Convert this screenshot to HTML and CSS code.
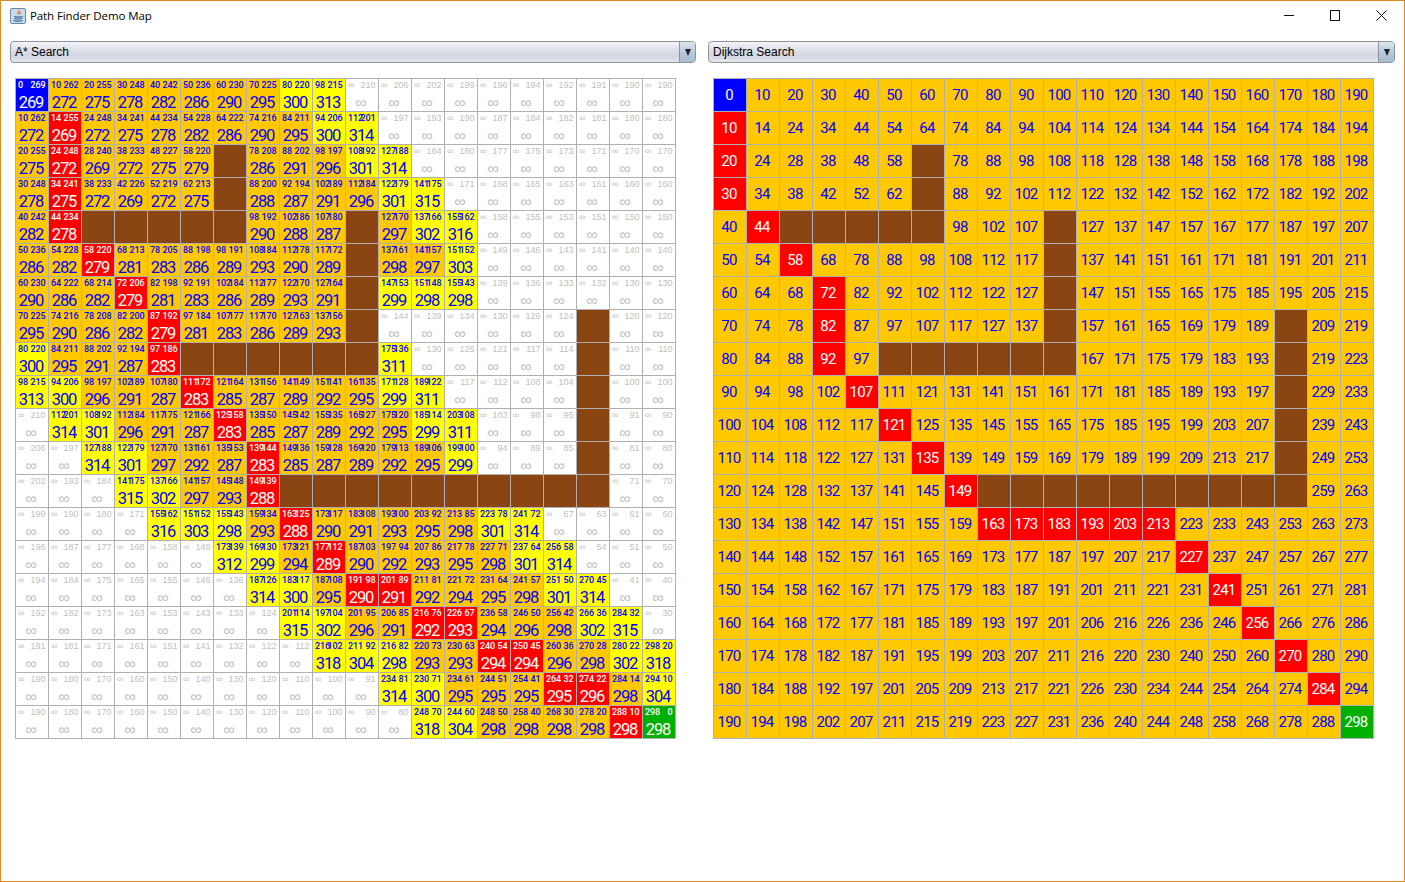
FILE: index.html
```html
<!DOCTYPE html>
<html lang="en">

<head>
    <meta charset="UTF-8">
    <title>Path Finder Demo Map</title>
    <link rel="stylesheet" href="styles.css">
</head>

<body>
    <div class="window">
        <div class="titlebar">
            <svg class="app-icon" viewBox="0 0 16 16" width="16" height="16">
                <rect x="0.5" y="0.5" width="15" height="15" rx="1.5" fill="#c9dcec" stroke="#6d87a0" />
                <path d="M8.5 2.5c1.5 1.2-1.8 2.2-.6 3.6M10.5 4c.8 1-1.6 1.5-.6 2.5" fill="none" stroke="#d9541a" stroke-width="1.1" />
                <path d="M4 8.5c1.5.8 6 .8 7.5 0M4.5 10.5c1.5.7 5 .7 6.5 0M3.5 12.5c2 1 7 1 9 0" fill="none" stroke="#2f5f8f" stroke-width="1.1" />
                <path d="M11.5 8.5c1.6-.3 1.6 1.6-.5 2" fill="none" stroke="#2f5f8f" stroke-width="0.9" />
            </svg>
            <span class="title">Path Finder Demo Map</span>
            <div class="controls">
                <div class="control">
                    <svg viewBox="0 0 11 11" width="11" height="11"><path d="M0 5.5h10" stroke="#111" fill="none" /></svg>
                </div>
                <div class="control">
                    <svg viewBox="0 0 11 11" width="11" height="11"><rect x="0.5" y="0.5" width="9" height="10" stroke="#111" fill="none" /></svg>
                </div>
                <div class="control">
                    <svg viewBox="0 0 11 11" width="11" height="11"><path d="M0.5 0.5l10 10M10.5 0.5l-10 10" stroke="#111" fill="none" /></svg>
                </div>
            </div>
        </div>

        <div class="panels">
            <div class="panel">
                <div class="combo">
                    <span class="combo-text">A* Search</span>
                    <span class="combo-arrow"></span>
                </div>
                <div class="board" id="astar"></div>
            </div>
            <div class="panel wide">
                <div class="combo">
                    <span class="combo-text">Dijkstra Search</span>
                    <span class="combo-arrow"></span>
                </div>
                <div class="board" id="dijkstra"></div>
            </div>
        </div>
    </div>
    <script src="board.js"></script>
</body>

</html>
```

FILE: styles.css
```css
* {
    box-sizing: border-box;
}

body {
    margin: 0;
    background: #ffffff;
    font-family: "Liberation Sans", Arial, sans-serif;
}

.window {
    width: 1405px;
    height: 882px;
    border: 1px solid #e08a1e;
    overflow: hidden;
}

.titlebar {
    display: flex;
    align-items: center;
    height: 29px;
    padding-left: 9px;
}

.app-icon {
    margin-right: 4px;
}

.title {
    font-family: "Open Sans", sans-serif;
    font-size: 11.5px;
    letter-spacing: -0.1px;
    color: #000000;
}

.controls {
    display: flex;
    margin-left: auto;
}

.control {
    display: flex;
    align-items: center;
    justify-content: center;
    width: 46px;
    height: 29px;
}

.panels {
    display: flex;
    gap: 12px;
    padding: 11px 9px 0 9px;
}

.panel {
    flex: 0 0 686px;
}

.panel.wide {
    flex: 1;
}

.combo {
    display: flex;
    align-items: center;
    justify-content: space-between;
    height: 22px;
    border: 1px solid #8d949c;
    border-radius: 4px;
    background: linear-gradient(#f4f5f8, #e2e4ec 30%, #d2d5df 70%, #e6e8ee);
    overflow: hidden;
}

.combo-text {
    padding-left: 4px;
    font-size: 12px;
    color: #000000;
}

.combo-arrow {
    display: flex;
    align-items: center;
    justify-content: center;
    width: 16px;
    height: 100%;
    border-left: 1px solid #8d949c;
    background: linear-gradient(#dce6ef, #b4c8da 55%, #a5bccf);
}

.combo-arrow::after {
    content: "";
    border-left: 3px solid transparent;
    border-right: 3px solid transparent;
    border-top: 7px solid #222222;
}

.board {
    display: grid;
    grid-template-columns: repeat(20, 32px);
    grid-auto-rows: 32px;
    gap: 1px;
    width: 661px;
    margin: 15px 0 0 5px;
    padding: 1px;
    background: #b0b0b0;
}

.cell {
    color: #0000ff;
    background: #ffc800;
    text-align: center;
}

.yellow {
    background: #ffff00;
}

.red {
    background: #ff0000;
    color: #ffffff;
}

.start {
    background: #0000ff;
    color: #ffffff;
}

.end {
    background: #00b000;
    color: #ffffff;
}

.wall {
    background: #8b4513;
}

.open {
    background: #ffffff;
    color: #c0c0c0;
}

.top {
    display: grid;
    padding: 1px 2.5px 0 2px;
    font-family: Roboto, sans-serif;
    font-size: 9px;
    font-weight: 500;
    line-height: 11px;
    letter-spacing: -0.15px;
}

.open .top {
    font-family: "Liberation Sans", sans-serif;
    font-weight: normal;
    letter-spacing: 0;
}

.top span {
    grid-area: 1 / 1;
    justify-self: start;
}

.top .est {
    justify-self: end;
}

.big {
    margin-top: 3px;
    padding-right: 2px;
    font-family: Roboto, sans-serif;
    font-size: 16.5px;
    font-weight: 400;
    line-height: 17px;
    letter-spacing: -1.1px;
}

.open .big {
    font-family: "Liberation Sans", sans-serif;
    font-weight: normal;
    font-size: 16px;
    letter-spacing: 0;
}

#dijkstra .cell {
    padding-right: 2px;
    font-family: Roboto, sans-serif;
    font-size: 15px;
    font-weight: 400;
    line-height: 32px;
    letter-spacing: -0.8px;
}
```

FILE: board.js
```js
// A* cells: class letter + g.h.f, u + h for never reached, w for a wall
const astarRows = [
    "s0.269.269 o10.262.272 o20.255.275 o30.248.278 o40.242.282 o50.236.286 o60.230.290 o70.225.295 y80.220.300 y98.215.313 u210 u206 u202 u199 u196 u194 u192 u191 u190 u190",
    "o10.262.272 r14.255.269 o24.248.272 o34.241.275 o44.234.278 o54.228.282 o64.222.286 o74.216.290 o84.211.295 y94.206.300 y112.201.314 u197 u193 u190 u187 u184 u182 u181 u180 u180",
    "o20.255.275 r24.248.272 o28.240.269 o38.233.272 o48.227.275 o58.220.279 w o78.208.286 o88.202.291 o98.197.296 y108.192.301 y127.188.314 u184 u180 u177 u175 u173 u171 u170 u170",
    "o30.248.278 r34.241.275 o38.233.272 o42.226.269 o52.219.272 o62.213.275 w o88.200.288 o92.194.287 o102.189.291 o112.184.296 y122.179.301 y141.175.315 u171 u168 u165 u163 u161 u160 u160",
    "o40.242.282 r44.234.278 w w w w w o98.192.290 o102.186.288 o107.180.287 w o127.170.297 y137.166.302 y155.162.316 u158 u155 u153 u151 u150 u150",
    "o50.236.286 o54.228.282 r58.220.279 o68.213.281 o78.205.283 o88.198.286 o98.191.289 o108.184.293 o112.178.290 o117.172.289 w o137.161.298 o141.157.297 y151.152.303 u149 u146 u143 u141 u140 u140",
    "o60.230.290 o64.222.286 o68.214.282 r72.206.279 o82.198.281 o92.191.283 o102.184.286 o112.177.289 o122.170.293 o127.164.291 w y147.153.299 y151.148.298 y155.143.298 u139 u136 u133 u132 u130 u130",
    "o70.225.295 o74.216.290 o78.208.286 o82.200.282 r87.192.279 o97.184.281 o107.177.283 o117.170.286 o127.163.289 o137.156.293 w u144 u139 u134 u130 u126 u124 w u120 u120",
    "y80.220.300 o84.211.295 o88.202.291 o92.194.287 r97.186.283 w w w w w w y175.136.311 u130 u125 u121 u117 u114 w u110 u110",
    "y98.215.313 y94.206.300 o98.197.296 o102.189.291 o107.180.287 r111.172.283 o121.164.285 o131.156.287 o141.149.289 o151.141.292 o161.135.295 y171.128.299 y189.122.311 u117 u112 u108 u104 w u100 u100",
    "u210 y112.201.314 y108.192.301 o112.184.296 o117.175.291 o121.166.287 r125.158.283 o135.150.285 o145.142.287 o155.135.289 o165.127.292 o175.120.295 y185.114.299 y203.108.311 u103 u98 u95 w u91 u90",
    "u206 u197 y127.188.314 y122.179.301 o127.170.297 o131.161.292 o135.153.287 r139.144.283 o149.136.285 o159.128.287 o169.120.289 o179.113.292 o189.106.295 y199.100.299 u94 u89 u85 w u81 u80",
    "u202 u193 u184 y141.175.315 y137.166.302 o141.157.297 o145.148.293 r149.139.288 w w w w w w w w w w u71 u70",
    "u199 u190 u180 u171 y155.162.316 y151.152.303 y155.143.298 o159.134.293 r163.125.288 o173.117.290 o183.108.291 o193.100.293 o203.92.295 o213.85.298 y223.78.301 y241.72.314 u67 u63 u61 u60",
    "u196 u187 u177 u168 u158 u149 y173.139.312 y169.130.299 o173.121.294 r177.112.289 o187.103.290 o197.94.292 o207.86.293 o217.78.295 o227.71.298 y237.64.301 y256.58.314 u54 u51 u50",
    "u194 u184 u175 u165 u155 u146 u136 y187.126.314 y183.117.300 o187.108.295 r191.98.290 r201.89.291 o211.81.292 o221.72.294 o231.64.295 o241.57.298 y251.50.301 y270.45.314 u41 u40",
    "u192 u182 u173 u163 u153 u143 u133 u124 y201.114.315 y197.104.302 o201.95.296 o206.85.291 r216.76.292 r226.67.293 o236.58.294 o246.50.296 o256.42.298 y266.36.302 y284.32.315 u30",
    "u191 u181 u171 u161 u151 u141 u132 u122 u112 y216.102.318 y211.92.304 y216.82.298 o220.73.293 o230.63.293 r240.54.294 r250.45.294 o260.36.296 o270.28.298 y280.22.302 y298.20.318",
    "u190 u180 u170 u160 u150 u140 u130 u120 u110 u100 u91 y234.81.314 y230.71.300 o234.61.295 o244.51.295 o254.41.295 r264.32.295 r274.22.296 o284.14.298 y294.10.304",
    "u190 u180 u170 u160 u150 u140 u130 u120 u110 u100 u90 u80 y248.70.318 y244.60.304 o248.50.298 o258.40.298 o268.30.298 o278.20.298 r288.10.298 e298.0.298"
];

// Dijkstra cells: plain number is orange, r/s/e prefix for path, start, end
const dijkstraRows = [
    "s0 10 20 30 40 50 60 70 80 90 100 110 120 130 140 150 160 170 180 190",
    "r10 14 24 34 44 54 64 74 84 94 104 114 124 134 144 154 164 174 184 194",
    "r20 24 28 38 48 58 w 78 88 98 108 118 128 138 148 158 168 178 188 198",
    "r30 34 38 42 52 62 w 88 92 102 112 122 132 142 152 162 172 182 192 202",
    "40 r44 w w w w w 98 102 107 w 127 137 147 157 167 177 187 197 207",
    "50 54 r58 68 78 88 98 108 112 117 w 137 141 151 161 171 181 191 201 211",
    "60 64 68 r72 82 92 102 112 122 127 w 147 151 155 165 175 185 195 205 215",
    "70 74 78 r82 87 97 107 117 127 137 w 157 161 165 169 179 189 w 209 219",
    "80 84 88 r92 97 w w w w w w 167 171 175 179 183 193 w 219 223",
    "90 94 98 102 r107 111 121 131 141 151 161 171 181 185 189 193 197 w 229 233",
    "100 104 108 112 117 r121 125 135 145 155 165 175 185 195 199 203 207 w 239 243",
    "110 114 118 122 127 131 r135 139 149 159 169 179 189 199 209 213 217 w 249 253",
    "120 124 128 132 137 141 145 r149 w w w w w w w w w w 259 263",
    "130 134 138 142 147 151 155 159 r163 r173 r183 r193 r203 r213 223 233 243 253 263 273",
    "140 144 148 152 157 161 165 169 173 177 187 197 207 217 r227 237 247 257 267 277",
    "150 154 158 162 167 171 175 179 183 187 191 201 211 221 231 r241 251 261 271 281",
    "160 164 168 172 177 181 185 189 193 197 201 206 216 226 236 246 r256 266 276 286",
    "170 174 178 182 187 191 195 199 203 207 211 216 220 230 240 250 260 r270 280 290",
    "180 184 188 192 197 201 205 209 213 217 221 226 230 234 244 254 264 274 r284 294",
    "190 194 198 202 207 211 215 219 223 227 231 236 240 244 248 258 268 278 288 e298"
];

const kinds = { o: "", y: "yellow", r: "red", s: "start", e: "end", w: "wall", u: "open" };

function addCell(board, kind) {
    const cell = document.createElement("div");
    cell.className = ("cell " + kinds[kind]).trim();
    board.appendChild(cell);
    return cell;
}

function addTop(cell, g, h, f) {
    const top = document.createElement("div");
    top.className = "top";
    top.innerHTML = "<span>" + g + "</span><span class=\"est\">" + h + "</span>";
    const big = document.createElement("div");
    big.className = "big";
    big.textContent = f;
    cell.appendChild(top);
    cell.appendChild(big);
}

const astar = document.getElementById("astar");
astarRows.join(" ").split(" ").forEach(function (token) {
    const kind = token[0];
    const cell = addCell(astar, kind);
    if (kind === "u") {
        addTop(cell, "∞", token.slice(1), "∞");
    } else if (kind !== "w") {
        const parts = token.slice(1).split(".");
        addTop(cell, parts[0], parts[1], parts[2]);
    }
});

const dijkstra = document.getElementById("dijkstra");
dijkstraRows.join(" ").split(" ").forEach(function (token) {
    const kind = /^\d/.test(token) ? "o" : token[0];
    const cell = addCell(dijkstra, kind);
    cell.textContent = token.replace(/^[a-z]/, "");
});
```
